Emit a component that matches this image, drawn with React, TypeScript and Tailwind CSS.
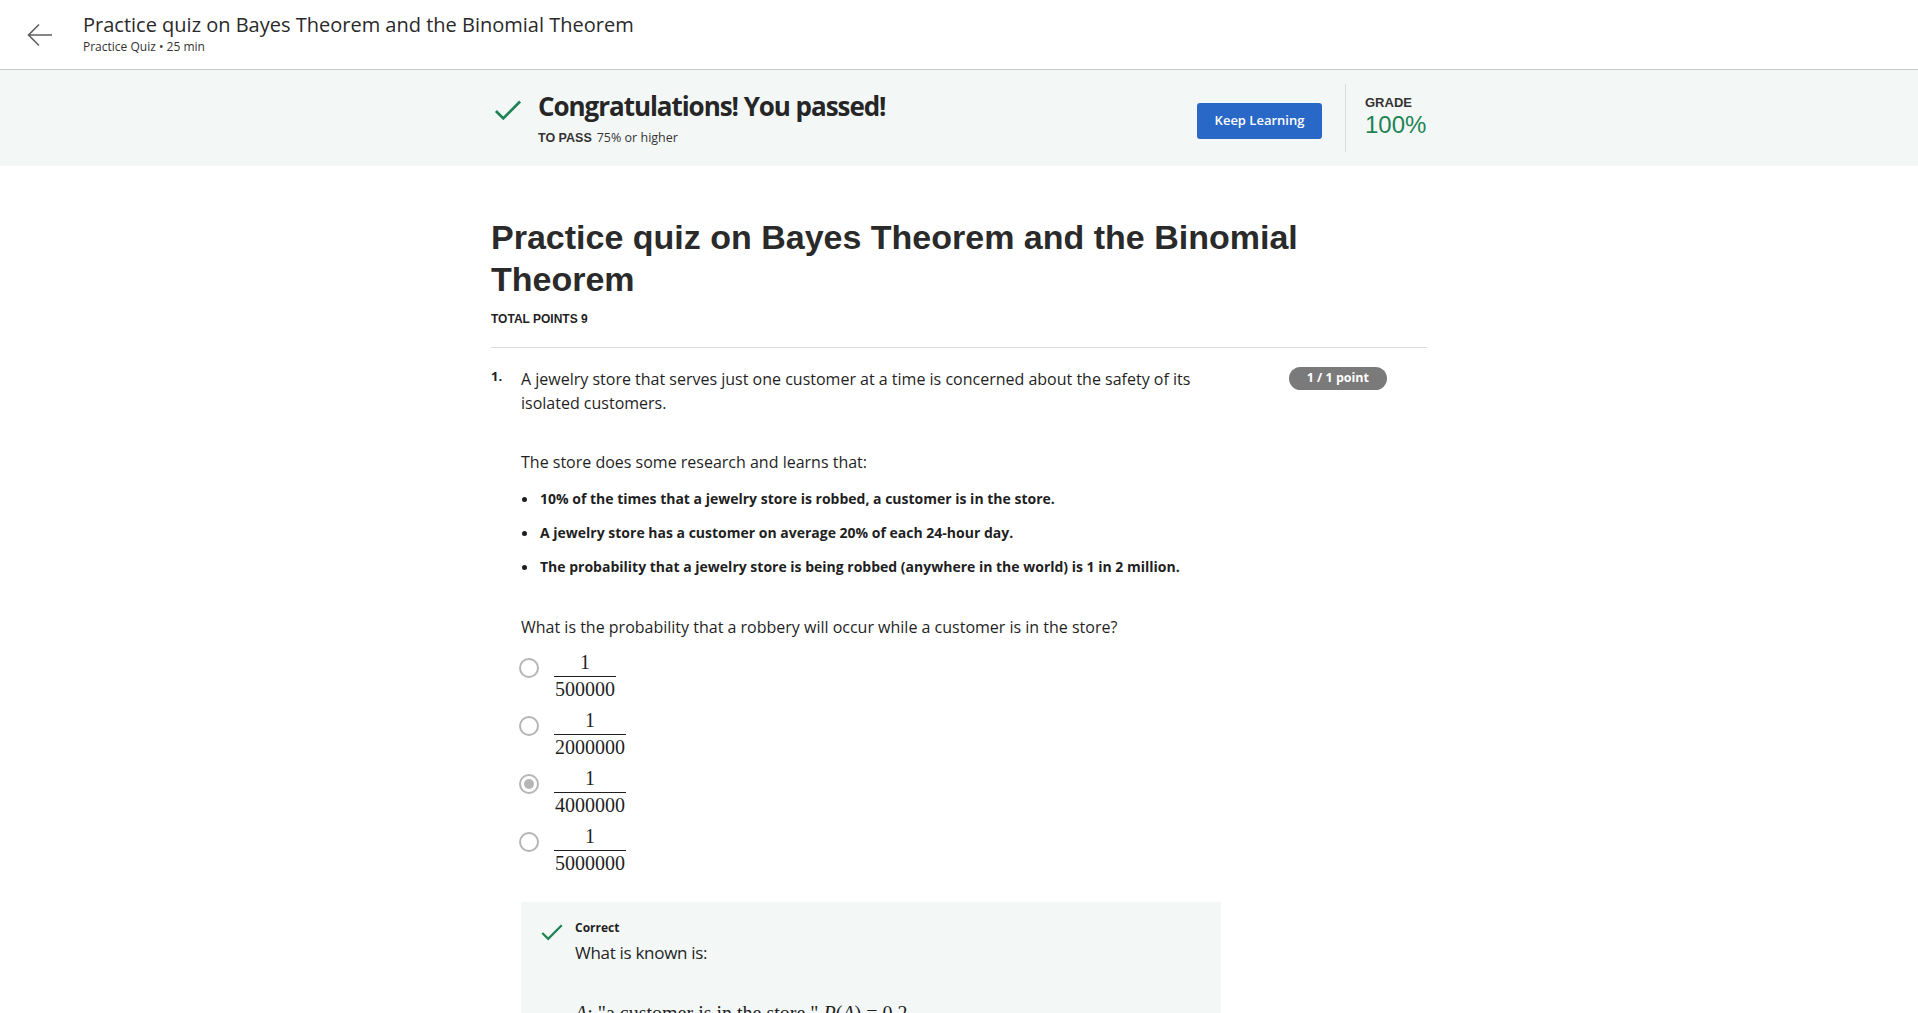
import { useState } from 'react'

const options = ['500000', '2000000', '4000000', '5000000']

const facts = [
  '10% of the times that a jewelry store is robbed, a customer is in the store.',
  'A jewelry store has a customer on average 20% of each 24-hour day.',
  'The probability that a jewelry store is being robbed (anywhere in the world) is 1 in 2 million.',
]

function Check({ className }: { className?: string }) {
  return (
    <svg viewBox="0 0 26 20" className={className} fill="none">
      <path d="M1.5 10.5 L8.5 17.5 L24.5 1.5" stroke="#1f8354" strokeWidth="2.6" />
    </svg>
  )
}

function Fraction({ den }: { den: string }) {
  return (
    <span className="inline-flex flex-col items-center font-['Liberation_Serif',serif] text-[20px] text-[#1f1f1f]">
      <span className="px-[2px] leading-[28px]">1</span>
      <span className="border-t border-[#1f1f1f] px-[1px] leading-[24px]">{den}</span>
    </span>
  )
}

export default function App() {
  const [picked, setPicked] = useState(2)

  return (
    <div className="min-h-screen bg-white font-['Open_Sans',sans-serif] text-[#1f1f1f]">
      <header className="flex h-[70px] items-center border-b border-[#c8c8c8]">
        <button className="ml-[27px] mr-[30px] flex h-[26px] w-[26px] items-center justify-center">
          <svg viewBox="0 0 26 24" className="h-[24px] w-[26px]" fill="none" stroke="#5f5f5f" strokeWidth="1.6">
            <path d="M25 12 H2 M12 1.5 L1.5 12 L12 22.5" />
          </svg>
        </button>
        <div className="-mt-[2px]">
          <h1 className="text-[20px] leading-[26px] text-[#2a2a2a]">
            Practice quiz on Bayes Theorem and the Binomial Theorem
          </h1>
          <p className="mt-[1px] text-[12px] leading-[16px] text-[#333]">Practice Quiz • 25 min</p>
        </div>
      </header>

      <section className="bg-[#f3f8f7]">
        <div className="mx-auto flex h-[96px] w-[936px] items-center">
          <Check className="ml-[3px] mt-[-16px] h-[21px] w-[28px]" />
          <div className="ml-[16px] mt-[2px]">
            <h2 className="-mt-[3px] text-[26px] font-bold leading-[32px] tracking-[-1.05px] text-[#262626]">
              Congratulations! You passed!
            </h2>
            <p className="mt-[8px] flex items-center text-[12.5px] leading-[16px] text-[#333]">
              <span className="mr-[5px] font-['Liberation_Sans',sans-serif] font-bold">TO PASS</span>
              <span>75% or higher</span>
            </p>
          </div>
          <div className="flex-1" />
          <button className="mt-[6px] h-[36px] w-[125px] rounded-[3px] bg-[#2a68c7] text-[13px] font-semibold text-white">
            Keep Learning
          </button>
          <div className="ml-[23px] h-[68px] w-px bg-[#d9dede]" />
          <div className="ml-[19px] w-[62px] font-['Liberation_Sans',sans-serif]">
            <div className="-mt-[2px] text-[13px] font-bold leading-[16px] text-[#333]">GRADE</div>
            <div className="text-[24px] leading-[28px] text-[#1f8354]">100%</div>
          </div>
        </div>
      </section>

      <main className="mx-auto w-[936px] pt-[50px]">
        <h1 className="font-['Liberation_Sans',sans-serif] text-[34px] font-bold leading-[42px] text-[#2a2a2a]">
          Practice quiz on Bayes Theorem and the Binomial Theorem
        </h1>
        <p className="mt-[11px] font-['Liberation_Sans',sans-serif] text-[12px] font-bold leading-[16px] text-[#1f1f1f]">
          TOTAL POINTS 9
        </p>
        <div className="mt-[20px] border-t border-[#dcdcdc]" />

        <div className="mt-[19px] flex">
          <span className="w-[30px] text-[13px] font-bold leading-[18px] text-[#1f1f1f]">1.</span>
          <div className="w-[700px]">
            <p className="w-[690px] text-[16px] leading-[24px] text-[#1f1f1f]">
              A jewelry store that serves just one customer at a time is concerned about the safety of its isolated
              customers.
            </p>
            <p className="mt-[35px] text-[16px] leading-[24px]">The store does some research and learns that:</p>
            <ul className="mt-[13px] flex flex-col gap-[10px]">
              {facts.map(f => (
                <li key={f} className="flex items-center text-[14px] font-bold leading-[24px]">
                  <span className="ml-[1px] mr-[13px] h-[5px] w-[5px] rounded-full bg-[#1f1f1f]" />
                  {f}
                </li>
              ))}
            </ul>
            <p className="mt-[36px] text-[16px] leading-[24px]">
              What is the probability that a robbery will occur while a customer is in the store?
            </p>
            <div className="mt-[9px] flex flex-col gap-[5px]">
              {options.map((den, i) => (
                <label key={den} className="flex cursor-pointer items-start" onClick={() => setPicked(i)}>
                  <span className="ml-[-2px] mr-[15px] mt-[10px] flex h-[20px] w-[20px] items-center justify-center rounded-full border-2 border-[#b5b5b5] bg-white">
                    {picked === i && <span className="h-[10px] w-[10px] rounded-full bg-[#b5b5b5]" />}
                  </span>
                  <Fraction den={den} />
                </label>
              ))}
            </div>

            <div className="mt-[27px] bg-[#f3f8f7] px-[20px] pb-[40px] pt-[17px]">
              <div className="flex">
                <Check className="mt-[5px] h-[17px] w-[22px]" />
                <div className="ml-[12px]">
                  <p className="text-[12px] font-bold leading-[18px]">Correct</p>
                  <p className="mt-[3px] text-[17px] leading-[26px] tracking-[-0.3px]">What is known is:</p>
                  <p className="mt-[34px] font-['Liberation_Serif',serif] text-[20px] leading-[26px]">
                    <i>A</i>: "a customer is in the store." <i>P</i>(<i>A</i>) = 0.2
                  </p>
                </div>
              </div>
            </div>
          </div>
          <div className="flex-1" />
          <div className="mr-[40px] mt-[-3px]">
            <span className="inline-flex h-[23px] items-center rounded-full bg-[#7a7a7a] px-[18px] text-[12.5px] font-bold text-white">
              1 / 1 point
            </span>
          </div>
        </div>
      </main>
    </div>
  )
}
